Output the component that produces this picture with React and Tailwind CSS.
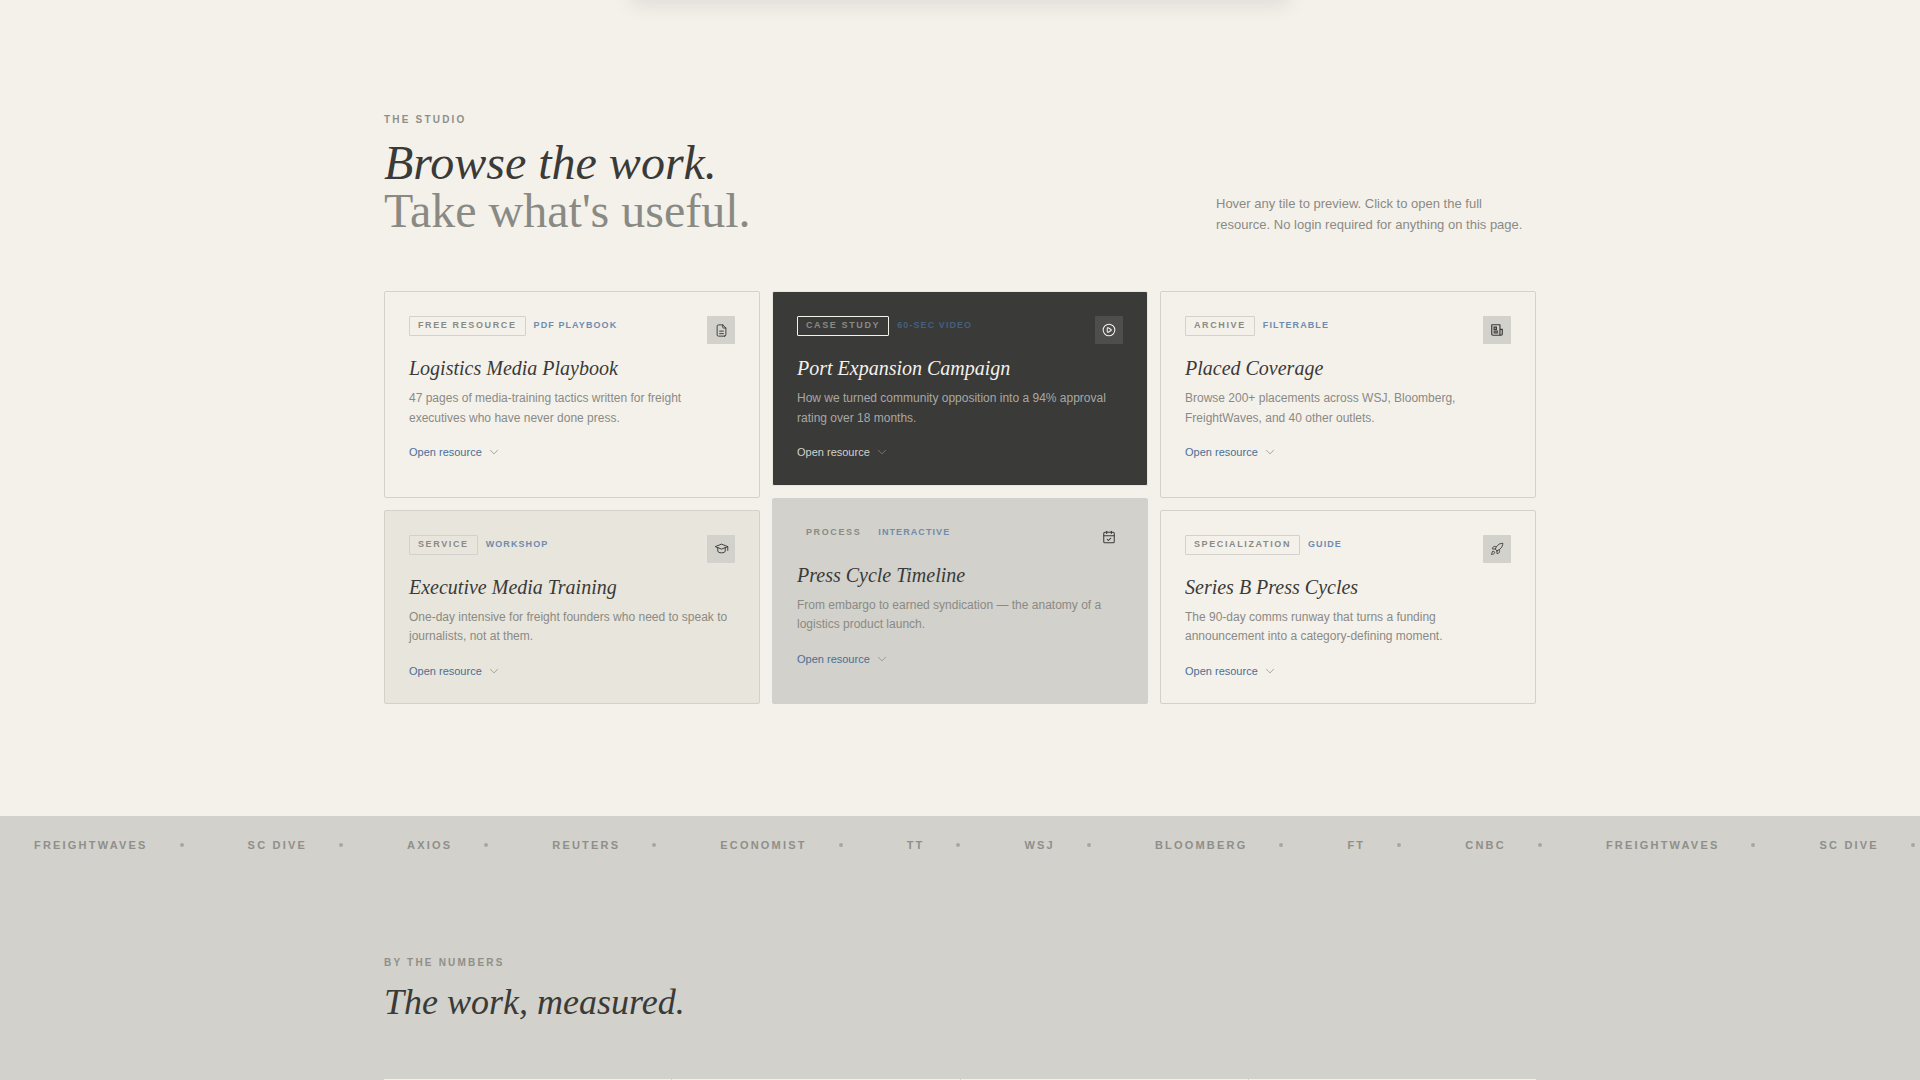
import { CalendarCheck, CirclePlay, Rocket } from "lucide-react";
import { BsChevronDown } from "react-icons/bs";
import { RiNewspaperLine } from "react-icons/ri";
import { TbFileDescription, TbSchool } from "react-icons/tb";

const outlets = [
  "FREIGHTWAVES",
  "SC DIVE",
  "AXIOS",
  "REUTERS",
  "ECONOMIST",
  "TT",
  "WSJ",
  "BLOOMBERG",
  "FT",
  "CNBC",
];

const columns = [
  [
    {
      tag: "FREE RESOURCE",
      kind: "PDF PLAYBOOK",
      title: "Logistics Media Playbook",
      text: "47 pages of media-training tactics written for freight executives who have never done press.",
      icon: <TbFileDescription size={15} strokeWidth={1.5} />,
      variant: "plain",
      grow: true,
    },
    {
      tag: "SERVICE",
      kind: "WORKSHOP",
      title: "Executive Media Training",
      text: "One-day intensive for freight founders who need to speak to journalists, not at them.",
      icon: <TbSchool size={15} strokeWidth={1.5} />,
      variant: "sand",
    },
  ],
  [
    {
      tag: "CASE STUDY",
      kind: "60-SEC VIDEO",
      title: "Port Expansion Campaign",
      text: "How we turned community opposition into a 94% approval rating over 18 months.",
      icon: <CirclePlay size={14} strokeWidth={1.75} />,
      variant: "dark",
    },
    {
      tag: "PROCESS",
      kind: "INTERACTIVE",
      title: "Press Cycle Timeline",
      text: "From embargo to earned syndication — the anatomy of a logistics product launch.",
      icon: <CalendarCheck size={14} strokeWidth={1.75} />,
      variant: "stone",
      grow: true,
    },
  ],
  [
    {
      tag: "ARCHIVE",
      kind: "FILTERABLE",
      title: "Placed Coverage",
      text: "Browse 200+ placements across WSJ, Bloomberg, FreightWaves, and 40 other outlets.",
      icon: <RiNewspaperLine size={14} />,
      variant: "plain",
      grow: true,
    },
    {
      tag: "SPECIALIZATION",
      kind: "GUIDE",
      title: "Series B Press Cycles",
      text: "The 90-day comms runway that turns a funding announcement into a category-defining moment.",
      icon: <Rocket size={14} strokeWidth={1.5} />,
      variant: "plain",
    },
  ],
];

const variants = {
  plain: {
    card: "bg-[#f4f1eb] border-[#d2d1cb]",
    tag: "border-[#d2d1cb] text-[#8a8a85]",
    kind: "text-[#6d8cae]",
    box: "bg-[#d2d1cb] text-[#3a3a38]",
    title: "text-[#3a3a38]",
    text: "text-[#8a8a85]",
    link: "text-[#4a6f96]",
  },
  sand: {
    card: "bg-[#e8e5dc] border-[#d2d1cb]",
    tag: "border-[#d2d1cb] text-[#8a8a85]",
    kind: "text-[#6d8cae]",
    box: "bg-[#d2d1cb] text-[#3a3a38]",
    title: "text-[#3a3a38]",
    text: "text-[#8a8a85]",
    link: "text-[#4a6f96]",
  },
  dark: {
    card: "bg-[#3a3a38] border-[#e8e5dc]",
    tag: "border-[#f4f1eb] text-[#8a8a85]",
    kind: "text-[#41617f]",
    box: "bg-[#4e4e4c] text-[#f4f1eb]",
    title: "text-[#f4f1eb]",
    text: "text-[#a8a8a3]",
    link: "text-[#d2d1cb]",
  },
  stone: {
    card: "bg-[#d2d1cb] border-[#d2d1cb]",
    tag: "border-[#d2d1cb] text-[#8a8a85]",
    kind: "text-[#6d8cae]",
    box: "bg-[#d2d1cb] text-[#3a3a38]",
    title: "text-[#3a3a38]",
    text: "text-[#8a8a85]",
    link: "text-[#4a6f96]",
  },
};

const ResourceCard = ({ tag, kind, title, text, icon, variant, grow }) => {
  const v = variants[variant];
  return (
    <div className={`border rounded-[2px] p-6 ${v.card} ${grow ? "flex-1" : ""}`}>
      <div className="flex justify-between items-start h-7 mb-3">
        <div className="flex items-center gap-2">
          <span
            className={`border rounded-[1px] px-2 h-5 flex items-center text-[9px] font-bold tracking-[0.18em] ${v.tag}`}
          >
            {tag}
          </span>
          <span className={`text-[9px] font-bold tracking-[0.12em] ${v.kind}`}>
            {kind}
          </span>
        </div>
        <div className={`w-7 h-7 flex items-center justify-center rounded-[1px] ${v.box}`}>
          {icon}
        </div>
      </div>
      <h3 className={`font-['Liberation_Serif',serif] italic text-[20px] leading-tight ${v.title}`}>
        {title}
      </h3>
      <p className={`mt-2 text-[12px] leading-relaxed ${v.text}`}>{text}</p>
      <a href="#" className={`mt-4 flex items-center gap-[7px] text-[11px] leading-[1.5] ${v.link}`}>
        Open resource
        <BsChevronDown size={10} className="text-[#8a8a85]" />
      </a>
    </div>
  );
};

const App = () => {
  return (
    <div className="relative h-[1080px] overflow-hidden bg-[#f4f1eb] font-['Liberation_Sans',Arial,sans-serif]">
      <div className="absolute left-1/2 -translate-x-1/2 -top-[40px] w-[656px] h-[40px] bg-[#f4f1eb] shadow-[0_4px_20px_rgba(58,58,56,0.12)]" />

      <section className="w-[1152px] mx-auto pt-28 pb-28">
        <div className="flex justify-between items-end mb-14">
          <div>
            <p className="text-[10px] leading-[15px] font-bold tracking-[0.22em] text-[#8f8f8a] mb-3">
              THE STUDIO
            </p>
            <h1 className="font-['Liberation_Serif',serif] text-[48px] leading-none">
              <em className="block text-[#3a3a38]">Browse the work.</em>
              <span className="block text-[#8a8a85]">Take what's useful.</span>
            </h1>
          </div>
          <p className="w-80 text-[13px] leading-relaxed text-[#8a8a85]">
            Hover any tile to preview. Click to open the full resource. No login required for anything on this page.
          </p>
        </div>

        <div className="grid grid-cols-3 gap-3 h-[413px]">
          {columns.map((cards, i) => (
            <div key={i} className="flex flex-col gap-3">
              {cards.map((card) => (
                <ResourceCard key={card.title} {...card} />
              ))}
            </div>
          ))}
        </div>
      </section>

      <section className="bg-[#d2d1cb] h-[264px]">
        <div className="overflow-hidden py-5 border-t border-[#d2d1cb]">
          <div className="flex w-max ml-[2px]">
            {[...outlets, ...outlets].map((name, i) => (
              <div key={i} className="flex items-center gap-8 px-8">
                <span className="text-[11px] leading-[16.5px] font-bold tracking-[0.2em] text-[#8f8f8a] whitespace-nowrap">
                  {name}
                </span>
                <span className="w-1 h-1 rounded-full bg-[#8a8a85] opacity-60" />
              </div>
            ))}
          </div>
        </div>

        <div className="w-[1152px] mx-auto pt-[81px]">
          <p className="text-[10px] leading-[15px] font-bold tracking-[0.22em] text-[#8f8f8a] mb-3">
            BY THE NUMBERS
          </p>
          <h2 className="font-['Liberation_Serif',serif] italic text-[36px] leading-[1.15] text-[#3a3a38] mb-14">
            The work, measured.
          </h2>
          <div className="grid grid-cols-4 gap-px h-[2px]">
            <div className="bg-[#f4f1eb]" />
            <div className="bg-[#f4f1eb]" />
            <div className="bg-[#f4f1eb]" />
            <div className="bg-[#f4f1eb]" />
          </div>
        </div>
      </section>
    </div>
  );
};

export default App;
